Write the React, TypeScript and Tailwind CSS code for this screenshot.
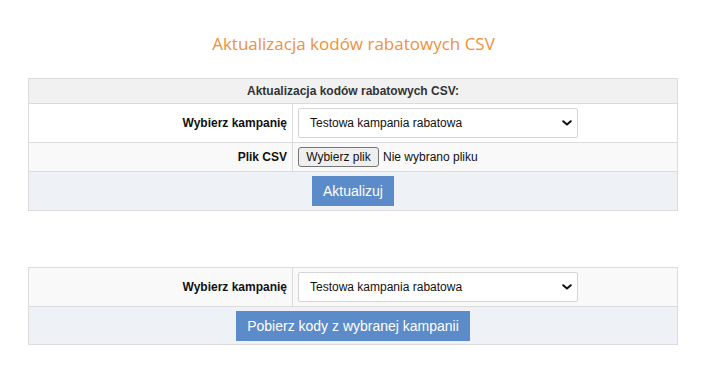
import React from 'react';

const Chevron: React.FC = () => (
  <svg width="10" height="6" viewBox="0 0 10 6" className="shrink-0">
    <path d="M1.2 1.2 L5 4.6 L8.8 1.2" fill="none" stroke="#111" strokeWidth="2" strokeLinecap="round" strokeLinejoin="round" />
  </svg>
);

const CampaignSelect: React.FC = () => (
  <div className="flex items-center justify-between w-[280px] h-[30px] bg-white border border-[#d4d4d4] rounded-[2px] pl-[11px] pr-[5px] text-[12px] text-[#111]">
    <span>Testowa kampania rabatowa</span>
    <Chevron />
  </div>
);

const BlueButton: React.FC<{ label: string }> = ({ label }) => (
  <button className="h-[30px] px-[11px] bg-[#5b8bc8] text-white text-[14px] leading-none">{label}</button>
);

export default function App() {
  return (
    <div className="min-h-screen bg-white font-['Liberation_Sans',Arial,sans-serif] text-[#222]">
      <h1 className="pt-[32px] text-center text-[17px] leading-[24px] text-[#f0903a] font-['Open_Sans',sans-serif]">
        Aktualizacja kodów rabatowych CSV
      </h1>

      {/* update form */}
      <div className="ml-[28px] mt-[22px] w-[650px] border border-[#dcdcdc]">
        <div className="h-[25px] flex items-center justify-center bg-[#f1f1f1] border-b border-[#dcdcdc] text-[12px] font-bold text-[#333]">
          Aktualizacja kodów rabatowych CSV:
        </div>
        <div className="grid grid-cols-[264px_1fr] h-[39px] border-b border-[#dcdcdc] bg-white">
          <div className="flex items-center justify-end pr-[5px] border-r border-[#dcdcdc] text-[12px] font-bold text-[#111]">Wybierz kampanię</div>
          <div className="flex items-center pl-[5px]">
            <CampaignSelect />
          </div>
        </div>
        <div className="grid grid-cols-[264px_1fr] h-[29px] border-b border-[#dcdcdc] bg-[#f9f9f9]">
          <div className="flex items-center justify-end pr-[5px] border-r border-[#dcdcdc] text-[12px] font-bold text-[#111]">Plik CSV</div>
          <div className="flex items-center pl-[5px] text-[12px] text-[#111]">
            <span className="h-[20px] w-[81px] flex items-center justify-center bg-[#efefef] border border-[#767676] rounded-[3px]">Wybierz plik</span>
            <span className="ml-[4px]">Nie wybrano pliku</span>
          </div>
        </div>
        <div className="h-[38px] flex items-center justify-center bg-[#eef2f7]">
          <BlueButton label="Aktualizuj" />
        </div>
      </div>

      {/* download form */}
      <div className="ml-[28px] mt-[56px] w-[650px] border border-[#dcdcdc]">
        <div className="grid grid-cols-[264px_1fr] h-[39px] border-b border-[#dcdcdc] bg-[#f9f9f9]">
          <div className="flex items-center justify-end pr-[5px] border-r border-[#dcdcdc] text-[12px] font-bold text-[#111]">Wybierz kampanię</div>
          <div className="flex items-center pl-[5px]">
            <CampaignSelect />
          </div>
        </div>
        <div className="h-[37px] flex items-center justify-center bg-[#eef2f7]">
          <BlueButton label="Pobierz kody z wybranej kampanii" />
        </div>
      </div>
    </div>
  );
}
